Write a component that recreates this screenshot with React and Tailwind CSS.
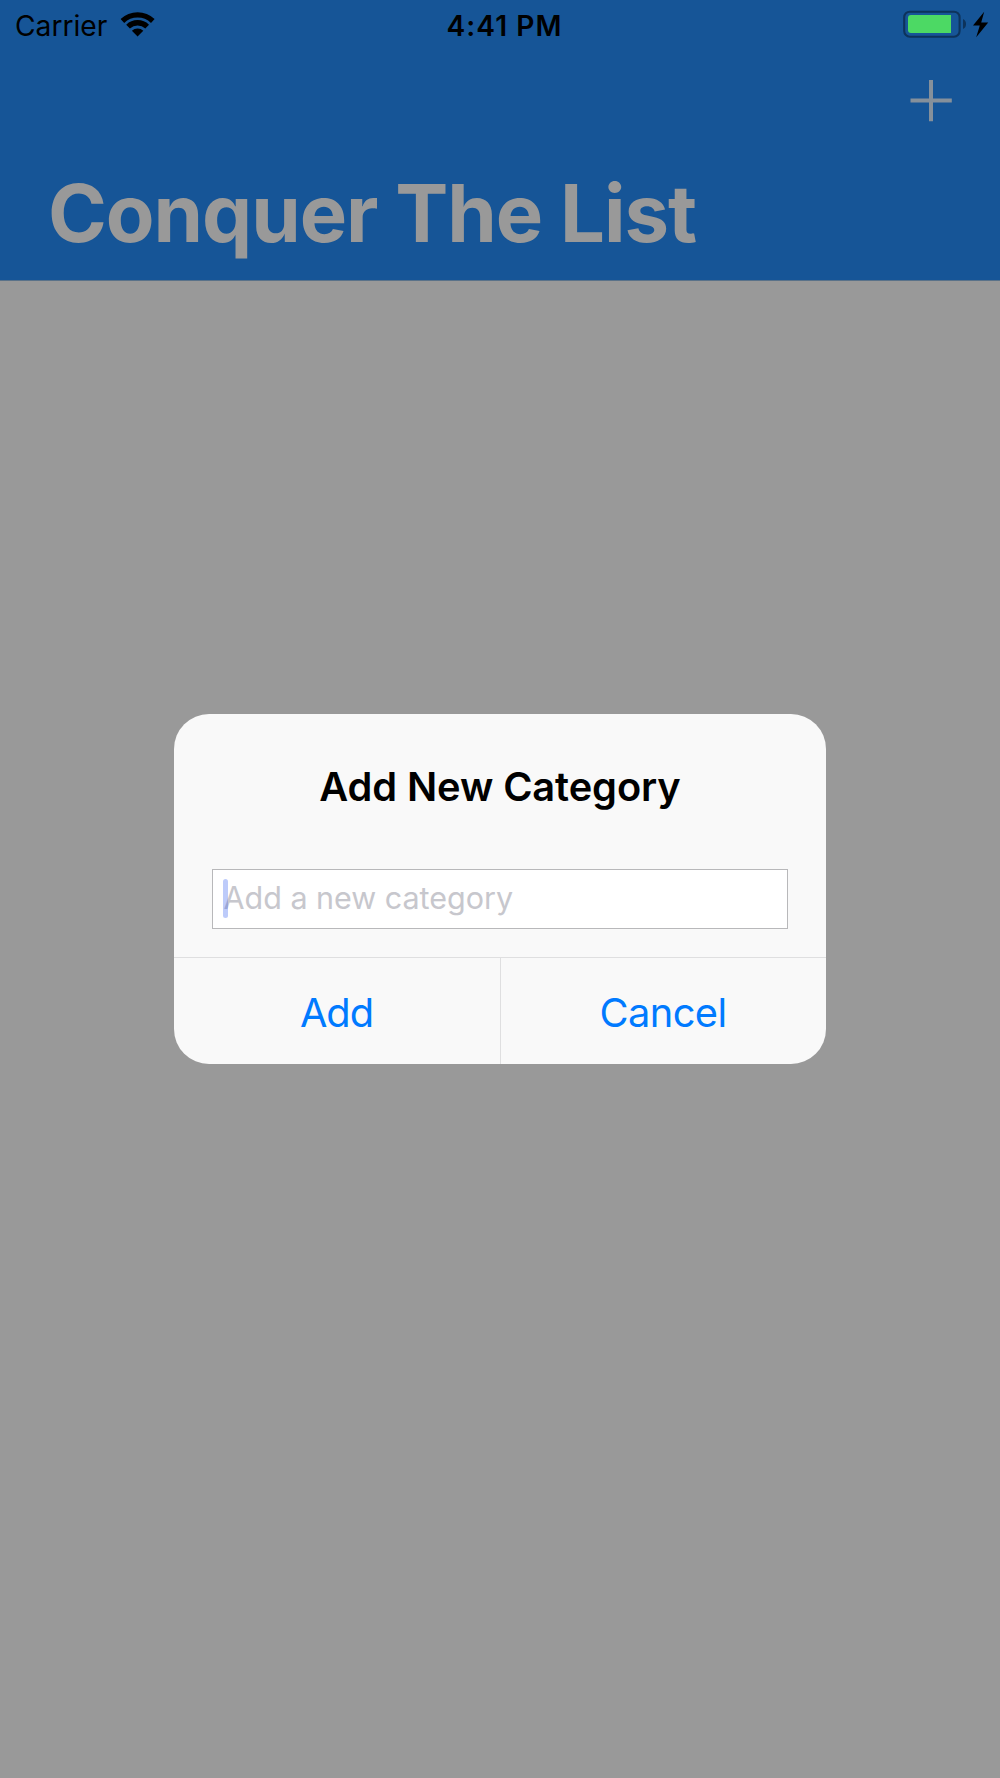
function WifiIcon() {
  return (
    <svg className="mt-[11px] ml-[13px] h-[26px] w-[36px]" viewBox="0.4 -0.5 36 26">
      <path d="M1 7.6A24.5 24.5 0 0 1 35 7.6L31.4 11.4A19.2 19.2 0 0 0 4.6 11.4Z" fill="#000" />
      <path d="M6.6 13.2A16.4 16.4 0 0 1 29.4 13.2L25.7 17A11.2 11.2 0 0 0 10.3 17Z" fill="#000" />
      <path d="M12.3 19.2A8.2 8.2 0 0 1 23.7 19.2L18 24.9Z" fill="#000" />
    </svg>
  );
}

function BatteryIcon() {
  return (
    <svg className="mt-[10px] h-[28px] w-[88px]" viewBox="0 0 88 28">
      <rect x="2.2" y="1.7" width="55.4" height="25" rx="5.6" fill="none" stroke="#0d335b" strokeWidth="2.1" />
      <path d="M9 5H49V23H9A3 3 0 0 1 6 20V8A3 3 0 0 1 9 5Z" fill="#4cd964" />
      <path d="M61 9C63.4 10 64 12 64 14S63.4 18 61 19Z" fill="#0d335b" />
      <path d="M82.2 1.8L71 15.5H77.8L74.2 27.2L86.2 12.4H79.2Z" fill="#000" />
    </svg>
  );
}

function StatusBar() {
  return (
    <div className="grid h-[51px] grid-cols-3 items-start pl-[15px] pr-[10px] text-[28.2px] leading-[53px] text-black">
      <div className="flex items-start">
        <span>Carrier</span>
        <WifiIcon />
      </div>
      <span className="pl-[4px] text-center font-semibold tracking-[1px]">4:41 PM</span>
      <div className="flex justify-end">
        <BatteryIcon />
      </div>
    </div>
  );
}

function NavBar() {
  return (
    <header className="h-[281px] border-b border-[#5a7289] bg-[#165597]">
      <StatusBar />
      <div className="flex h-[99px] items-center justify-end pr-[48px]">
        <button aria-label="Add category" className="flex">
          <svg className="h-[42px] w-[42px]" viewBox="0 0 42 42">
            <path d="M0.5 20.6H41.8M21 0V41.2" stroke="#85909b" strokeWidth="4" fill="none" />
          </svg>
        </button>
      </div>
      <h1 className="pl-[48px] text-[79.6px] leading-[126px] font-bold tracking-[-1.05px] text-[#999999]">Conquer The List</h1>
    </header>
  );
}

function CategoryAlert() {
  return (
    <section className="flex h-[350px] w-[652px] flex-col overflow-hidden rounded-[35px] bg-[#f9f9f9]">
      <div className="h-[244px] shrink-0 border-b border-[#dfdfe0] px-[38px]">
        <h2 className="pt-[49px] text-center text-[39.8px] leading-[48px] font-semibold tracking-[-0.1px] text-black">Add New Category</h2>
        <div className="relative mt-[58px] flex h-[60px] items-start border border-[#b8b8ba] bg-white pl-[10.5px]">
          <span className="text-[30.5px] leading-[56px] tracking-[-0.02px] text-[#c7c7cd]">Add a new category</span>
          <span className="absolute top-[9px] left-[10px] h-[39px] w-[5px] rounded-full bg-[#426bf2]/35" />
        </div>
      </div>
      <div className="grid grow grid-cols-2 text-[39.8px] leading-[110px] text-[#007aff]">
        <button className="pr-[1px] tracking-[-1px]">Add</button>
        <button className="border-l border-[#dfdfe0] pr-[1px] tracking-[-0.6px]">Cancel</button>
      </div>
    </section>
  );
}

export default function App() {
  return (
    <div className="flex h-[1778px] w-[1000px] flex-col bg-[#999999] font-['Inter',sans-serif]">
      <NavBar />
      <main className="flex justify-center pt-[433px]">
        <CategoryAlert />
      </main>
    </div>
  );
}
